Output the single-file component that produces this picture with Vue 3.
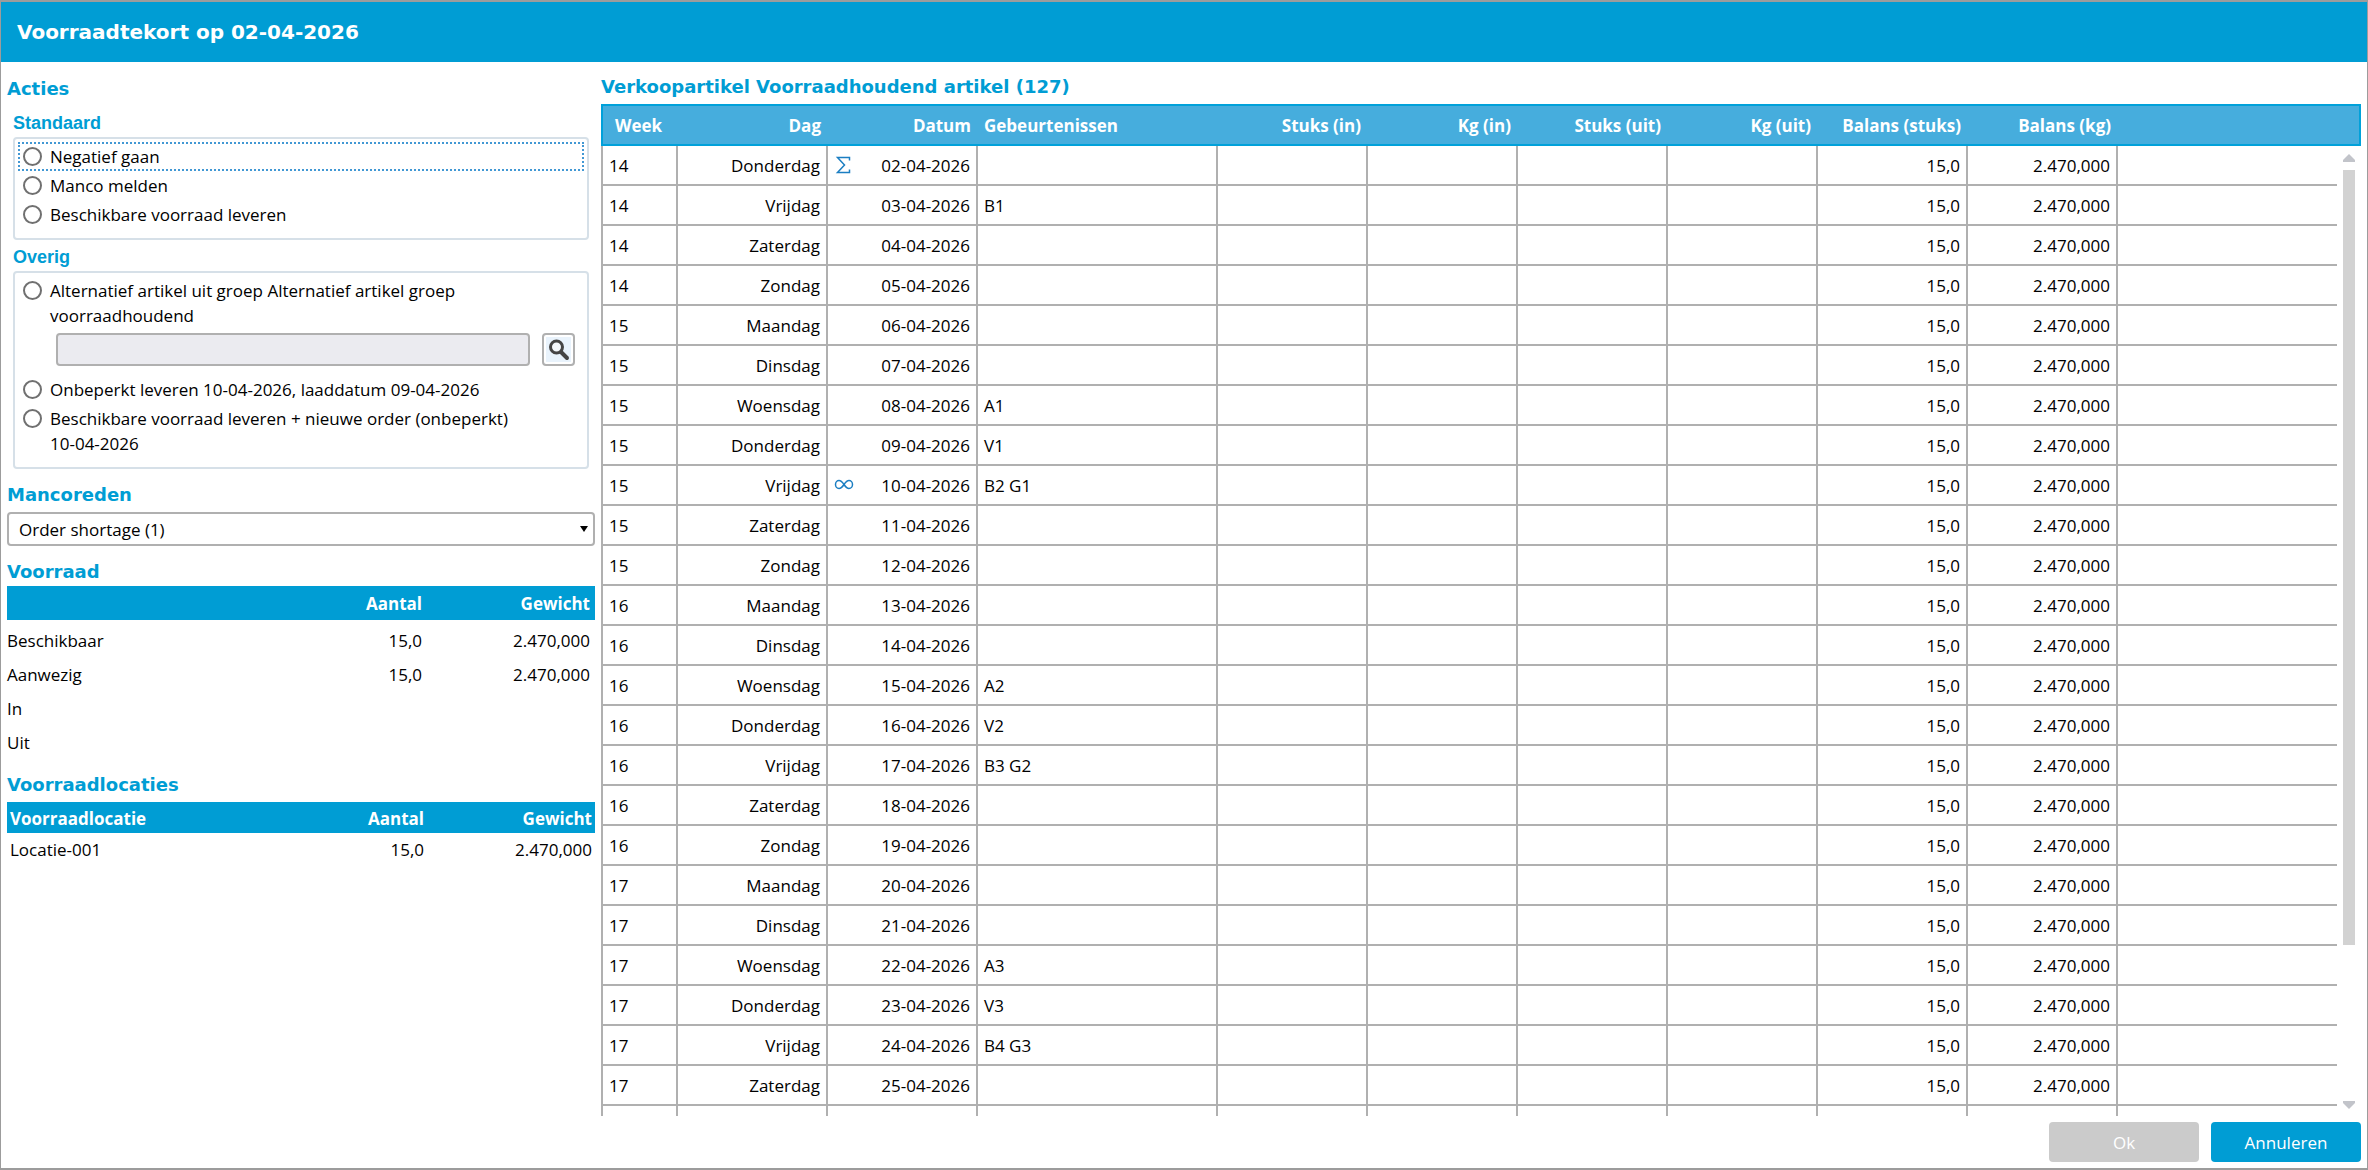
<script setup>
import { ref } from 'vue'

const action = ref('')
const reason = ref('1')

const standardActions = [
  { id: 'negative', label: 'Negatief gaan' },
  { id: 'report', label: 'Manco melden' },
  { id: 'available', label: 'Beschikbare voorraad leveren' },
]

const stock = [
  { label: 'Beschikbaar', count: '15,0', weight: '2.470,000' },
  { label: 'Aanwezig', count: '15,0', weight: '2.470,000' },
  { label: 'In', count: '', weight: '' },
  { label: 'Uit', count: '', weight: '' },
]

const locations = [{ label: 'Locatie-001', count: '15,0', weight: '2.470,000' }]

const weekdays = ['Maandag', 'Dinsdag', 'Woensdag', 'Donderdag', 'Vrijdag', 'Zaterdag', 'Zondag']
const events = { 3: 'B1', 8: 'A1', 9: 'V1', 10: 'B2 G1', 15: 'A2', 16: 'V2', 17: 'B3 G2', 22: 'A3', 23: 'V3', 24: 'B4 G3' }
const marks = { 2: 'sum', 10: 'infinity' }

const days = Array.from({ length: 24 }, (_, i) => {
  const date = i + 2
  return {
    week: 14 + Math.floor((i + 3) / 7),
    day: weekdays[(i + 3) % 7],
    date: `${String(date).padStart(2, '0')}-04-2026`,
    mark: marks[date],
    events: events[date] ?? '',
  }
})
</script>

<template>
  <main class="dialog">
    <header class="titlebar"><h1>Voorraadtekort op 02-04-2026</h1></header>

    <div class="content">
      <aside class="side">
        <h2>Acties</h2>

        <h3>Standaard</h3>
        <div class="group standard">
          <label v-for="(item, i) in standardActions" :key="item.id" class="option" :class="{ focused: i === 0 }">
            <input v-model="action" type="radio" name="action" :value="item.id" />
            <span>{{ item.label }}</span>
          </label>
        </div>

        <h3>Overig</h3>
        <div class="group other">
          <label class="option">
            <input v-model="action" type="radio" name="action" value="alternative" />
            <span>Alternatief artikel uit groep Alternatief artikel groep voorraadhoudend</span>
          </label>
          <div class="lookup">
            <input type="text" aria-label="Alternatief artikel" disabled />
            <button type="button" aria-label="Zoeken">
              <svg viewBox="0 0 24 24" width="24" height="24">
                <path d="M14 14l6 6" stroke="#454545" stroke-width="4" stroke-linecap="round" />
                <circle cx="9.5" cy="9" r="6" fill="#f4f8fc" stroke="#454545" stroke-width="3" />
              </svg>
            </button>
          </div>
          <label class="option">
            <input v-model="action" type="radio" name="action" value="unlimited" />
            <span>Onbeperkt leveren 10-04-2026, laaddatum 09-04-2026</span>
          </label>
          <label class="option">
            <input v-model="action" type="radio" name="action" value="neworder" />
            <span>Beschikbare voorraad leveren + nieuwe order (onbeperkt) 10-04-2026</span>
          </label>
        </div>

        <h2><label for="reason">Mancoreden</label></h2>
        <div class="select">
          <select id="reason" v-model="reason">
            <option value="1">Order shortage (1)</option>
          </select>
          <svg viewBox="0 0 8 6" width="8" height="6"><path d="M0 0h8L4 6z" fill="#000" /></svg>
        </div>

        <h2 class="tight">Voorraad</h2>
        <table class="stock">
          <thead>
            <tr><th></th><th>Aantal</th><th>Gewicht</th></tr>
          </thead>
          <tbody>
            <tr v-for="row in stock" :key="row.label">
              <td>{{ row.label }}</td><td>{{ row.count }}</td><td>{{ row.weight }}</td>
            </tr>
          </tbody>
        </table>

        <h2 class="locations-title">Voorraadlocaties</h2>
        <table class="stock locations">
          <thead>
            <tr><th>Voorraadlocatie</th><th>Aantal</th><th>Gewicht</th></tr>
          </thead>
          <tbody>
            <tr v-for="row in locations" :key="row.label">
              <td>{{ row.label }}</td><td>{{ row.count }}</td><td>{{ row.weight }}</td>
            </tr>
          </tbody>
        </table>
      </aside>

      <section class="overview">
        <h2>Verkoopartikel Voorraadhoudend artikel (127)</h2>
        <div class="viewport">
          <table class="days">
            <colgroup>
              <col class="c-week" /><col class="c-std" /><col class="c-std" /><col class="c-events" />
              <col v-for="n in 6" :key="n" class="c-std" />
              <col /><col class="c-scroll" />
            </colgroup>
            <thead>
              <tr>
                <th class="mid">Week</th>
                <th>Dag</th>
                <th>Datum</th>
                <th class="left">Gebeurtenissen</th>
                <th>Stuks (in)</th>
                <th>Kg (in)</th>
                <th>Stuks (uit)</th>
                <th>Kg (uit)</th>
                <th>Balans (stuks)</th>
                <th>Balans (kg)</th>
                <th></th>
                <th></th>
              </tr>
            </thead>
            <tbody>
              <tr v-for="row in days" :key="row.date">
                <td class="left">{{ row.week }}</td>
                <td>{{ row.day }}</td>
                <td>
                  <div class="date">
                    <svg v-if="row.mark === 'sum'" viewBox="0 0 20 18" width="20" height="18">
                      <path d="M15.5 4.500V1.500H3.500L10.500 9L3.500 16.500H15.500V13.500" />
                    </svg>
                    <svg v-else-if="row.mark === 'infinity'" viewBox="0 0 20 18" width="20" height="18">
                      <path d="M10 8.500C8 5.500 7 4.500 5 4.500C3 4.500 1.500 6.300 1.500 8.500C1.500 10.700 3 12.500 5 12.500C7 12.500 8 11.500 10 8.500C12 5.500 13 4.500 15 4.500C17 4.500 18.500 6.300 18.500 8.500C18.500 10.700 17 12.500 15 12.500C13 12.500 12 11.500 10 8.500Z" />
                    </svg>
                    <span>{{ row.date }}</span>
                  </div>
                </td>
                <td class="left">{{ row.events }}</td>
                <td></td><td></td><td></td><td></td>
                <td>15,0</td>
                <td>2.470,000</td>
                <td></td>
                <td></td>
              </tr>
              <tr><td v-for="n in 12" :key="n"></td></tr>
            </tbody>
          </table>
          <div class="scrollbar" aria-hidden="true">
            <svg viewBox="0 0 12 8" width="12" height="8"><path d="M6 0L12 6V8H0V6z" /></svg>
            <div class="track"><div class="thumb"></div></div>
            <svg viewBox="0 0 12 8" width="12" height="8"><path d="M0 0H12V2L6 8L0 2z" /></svg>
          </div>
        </div>
        <footer class="buttons">
          <button type="button" disabled>Ok</button>
          <button type="button">Annuleren</button>
        </footer>
      </section>
    </div>
  </main>
</template>

<style>
body {
  background: #fff;
}
</style>

<style scoped>
* {
  box-sizing: border-box;
}

.dialog {
  display: flex;
  flex-direction: column;
  height: 100vh;
  border: solid #9c9c9c;
  border-width: 2px 1px;
  font: 17px/25px 'Open Sans', 'Noto Sans', sans-serif;
  color: #000;
}

h1,
h2,
h3 {
  margin: 0;
  color: #009dd4;
  font: bold 18px/24px 'DejaVu Sans', Verdana, sans-serif;
}

.titlebar {
  display: flex;
  align-items: center;
  height: 60px;
  flex: none;
  padding-left: 16px;
  background: #009dd4;
}

h1 {
  color: #fff;
  font-size: 20px;
}

h3 {
  margin: 5px 0 2px 6px;
  font: bold 18px/24px 'Liberation Sans', Arial, sans-serif;
}

h2 + h3 {
  margin-top: 10px;
}

.content {
  display: flex;
  flex: 1;
  min-height: 0;
  gap: 6px;
  padding: 0 6px 6px 6px;
}

.side {
  flex: none;
  width: 588px;
  padding-top: 15px;
}

.group {
  margin: 0 6px;
  border: 2px solid #d6e0e8;
  border-radius: 4px;
}

.standard {
  padding: 3px 3px 9px;
}

.option {
  display: flex;
  gap: 8px;
  padding: 2px 5px;
  align-items: flex-start;
}

.standard .option {
  height: 29px;
}

.focused {
  outline: 2px dotted #4298d4;
  outline-offset: -2px;
}

.option input {
  appearance: none;
  flex: none;
  width: 19px;
  height: 19px;
  margin: 3px 0 0;
  border: 2px solid #707070;
  border-radius: 50%;
  background: #fff;
}

.other {
  padding: 3px 3px 9px;
}

.other .option {
  padding-right: 72px;
}

.lookup {
  display: flex;
  gap: 12px;
  margin: 3px 9px 9px 38px;
}

.lookup input {
  flex: 1;
  min-width: 0;
  height: 33px;
  border: 2px solid #b0b0b0;
  border-radius: 4px;
  background: #ebebf0;
}

.lookup button {
  display: grid;
  place-items: center;
  width: 33px;
  height: 33px;
  padding: 0;
  border: 2px solid #b0b0b0;
  border-radius: 4px;
  background: #e9f3fc;
  box-shadow: inset 0 0 0 2px #fff;
}

.group + h2 {
  margin-top: 14px;
}

.select {
  position: relative;
  margin-top: 5px;
}

.select select {
  display: block;
  appearance: none;
  width: 100%;
  height: 34px;
  padding: 0 10px;
  border: 2px solid #b0b0b0;
  border-radius: 4px;
  background: #fff;
  color: #000;
  font: inherit;
}

.select svg {
  position: absolute;
  top: 14px;
  right: 7px;
}

.tight {
  margin-top: 14px;
}

table {
  width: 100%;
  border-spacing: 0;
  table-layout: fixed;
}

th,
td {
  padding: 0;
  text-align: right;
  white-space: nowrap;
}

.stock {
  margin-top: 2px;
}

.stock th {
  height: 34px;
  background: #009dd4;
  color: #fff;
}

.stock td {
  height: 34px;
  padding-top: 6px;
}

.stock th:first-child,
.stock td:first-child {
  text-align: left;
}

.stock th:nth-child(n + 2) {
  width: 168px;
}

.stock :is(th, td):nth-child(n + 2) {
  padding-right: 5px;
}

.locations-title {
  margin-top: 17px;
}

.locations {
  margin-top: 5px;
}

.locations th {
  height: 31px;
  padding-top: 2px;
}

.locations td {
  height: 30px;
  padding-top: 2px;
}

.locations :is(th, td) {
  padding-left: 3px;
}

.locations :is(th, td):nth-child(n + 2) {
  padding-right: 3px;
}

.overview {
  display: flex;
  flex: 1;
  flex-direction: column;
  min-width: 0;
  padding-top: 13px;
}

.overview h2 {
  margin-bottom: 5px;
}

.viewport {
  position: relative;
  flex: 1;
  min-height: 0;
  overflow: hidden;
}

.c-week {
  width: 77px;
}

.c-std {
  width: 150px;
}

.c-events {
  width: 240px;
}

.c-scroll {
  width: 24px;
}

.days th {
  height: 42px;
  padding: 0 7px;
  border: solid #00a1da;
  border-width: 2px 0;
  background: #46addd;
  color: #fff;
}

.days th:first-child {
  border-left-width: 2px;
}

.days th:last-child {
  border-right-width: 2px;
}

.days td {
  height: 40px;
  padding: 0 6px;
  border: solid #b0b0b0;
  border-width: 0 2px 2px 0;
}

.days td:first-child {
  border-left-width: 2px;
}

.days td:nth-child(11) {
  border-right-width: 0;
}

.days td:last-child {
  border: 0;
}

.days .left {
  padding-left: 6px;
  text-align: left;
}

.days .mid {
  padding: 0 8px 0 4px;
  text-align: center;
}

.date {
  display: flex;
  align-items: center;
}

.date span {
  margin-left: auto;
}

.date svg {
  fill: none;
  stroke: #1b7ec2;
  stroke-width: 1.5;
}

.scrollbar {
  position: absolute;
  top: 50px;
  right: 6px;
  bottom: 7px;
  display: flex;
  flex-direction: column;
  gap: 8px;
  width: 12px;
}

.scrollbar svg {
  display: block;
  fill: #c2c4ca;
}

.track {
  flex: 1;
}

.thumb {
  height: 84%;
  background: #d2d2d2;
}

.buttons {
  display: flex;
  flex: none;
  justify-content: flex-end;
  gap: 12px;
  margin-top: 6px;
}

.buttons button {
  width: 150px;
  height: 40px;
  padding: 0;
  border: 0;
  border-radius: 4px;
  background: #009dd4;
  color: #fff;
  font: inherit;
}

.buttons button:disabled {
  background: #cbcbcb;
}
</style>
